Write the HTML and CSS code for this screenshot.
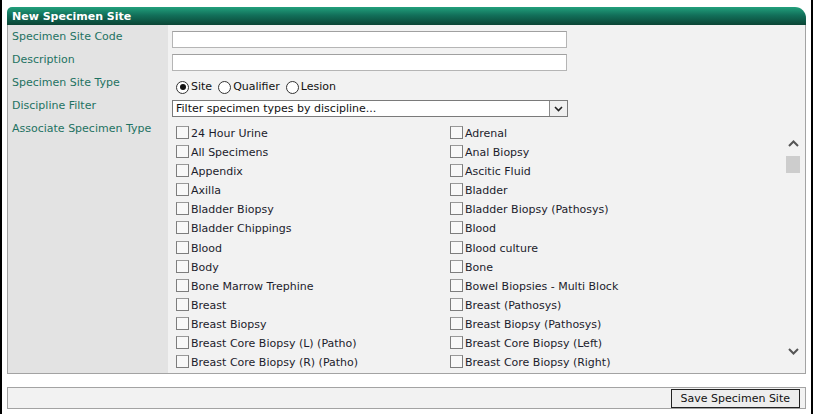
FILE: index.html
```html
<!DOCTYPE html>
<html>
<head>
<title>New Specimen Site</title>
<link rel="stylesheet" href="styles.css">
</head>
<body>
<div class="frame">

<div class="title">New Specimen Site</div>

<div class="form">
  <div class="label">Specimen Site Code</div>
  <div class="value"><input class="text" type="text"></div>

  <div class="label">Description</div>
  <div class="value"><input class="text" type="text"></div>

  <div class="label">Specimen Site Type</div>
  <div class="value radios">
    <span class="opt"><span class="radio on"></span>Site</span>
    <span class="opt"><span class="radio"></span>Qualifier</span>
    <span class="opt"><span class="radio"></span>Lesion</span>
  </div>

  <div class="label">Discipline Filter</div>
  <div class="value">
    <div class="select">
      <span class="select-text">Filter specimen types by discipline...</span>
      <span class="select-btn">
        <svg width="9" height="6" viewBox="0 0 9 6"><path d="M1 1 L4.5 4.5 L8 1" fill="none" stroke="#222" stroke-width="1.6"/></svg>
      </span>
    </div>
  </div>

  <div class="label">Associate Specimen Type</div>
  <div class="value list-cell">
    <div class="list">
      <div class="item"><span class="box"></span>24 Hour Urine</div>
      <div class="item"><span class="box"></span>Adrenal</div>
      <div class="item"><span class="box"></span>All Specimens</div>
      <div class="item"><span class="box"></span>Anal Biopsy</div>
      <div class="item"><span class="box"></span>Appendix</div>
      <div class="item"><span class="box"></span>Ascitic Fluid</div>
      <div class="item"><span class="box"></span>Axilla</div>
      <div class="item"><span class="box"></span>Bladder</div>
      <div class="item"><span class="box"></span>Bladder Biopsy</div>
      <div class="item"><span class="box"></span>Bladder Biopsy (Pathosys)</div>
      <div class="item"><span class="box"></span>Bladder Chippings</div>
      <div class="item"><span class="box"></span>Blood</div>
      <div class="item"><span class="box"></span>Blood</div>
      <div class="item"><span class="box"></span>Blood culture</div>
      <div class="item"><span class="box"></span>Body</div>
      <div class="item"><span class="box"></span>Bone</div>
      <div class="item"><span class="box"></span>Bone Marrow Trephine</div>
      <div class="item"><span class="box"></span>Bowel Biopsies - Multi Block</div>
      <div class="item"><span class="box"></span>Breast</div>
      <div class="item"><span class="box"></span>Breast (Pathosys)</div>
      <div class="item"><span class="box"></span>Breast Biopsy</div>
      <div class="item"><span class="box"></span>Breast Biopsy (Pathosys)</div>
      <div class="item"><span class="box"></span>Breast Core Biopsy (L) (Patho)</div>
      <div class="item"><span class="box"></span>Breast Core Biopsy (Left)</div>
      <div class="item"><span class="box"></span>Breast Core Biopsy (R) (Patho)</div>
      <div class="item"><span class="box"></span>Breast Core Biopsy (Right)</div>
    </div>
    <div class="scrollbar">
      <div class="arrow">
        <svg width="11" height="7" viewBox="0 0 11 7"><path d="M1 6 L5.5 1.5 L10 6" fill="none" stroke="#555" stroke-width="2"/></svg>
      </div>
      <div class="thumb"></div>
      <div class="track"></div>
      <div class="arrow">
        <svg width="11" height="7" viewBox="0 0 11 7"><path d="M1 1 L5.5 5.5 L10 1" fill="none" stroke="#555" stroke-width="2"/></svg>
      </div>
    </div>
  </div>
</div>

<div class="footer">
  <button class="save" type="button">Save Specimen Site</button>
</div>

</div>
</body>
</html>
```

FILE: styles.css
```css
/* New Specimen Site form */

body
{ margin: 0;
background-color: white;
font-family: "DejaVu Sans", Verdana, sans-serif;
font-size: 11px;
}

div.frame
{ height: 412px;
border-left: 2px solid #000;
border-right: 2px solid #000;
border-bottom: 2px solid #000;
padding: 7px 5px 0 5px;
}

div.title
{ height: 18px;
line-height: 19px;
padding-left: 5px;
color: white;
font-weight: bold;
background: linear-gradient(#22a07c, #12705a 45%, #0b4535);
border-radius: 5px 11px 0 0;
}

div.form
{ display: grid;
grid-template-columns: 160px 1fr;
grid-template-rows: 23px 23px 23px 23px 1fr;
height: 348px;
border: 1px solid #a3a3a3;
border-top: none;
background-color: #f2f2f2;
}

div.label
{ background-color: #e3e3e3;
color: #1e7262;
padding: 5px 4px 0 4px;
line-height: 14px;
}

div.value
{ padding: 6px 0 0 4px;
}

input.text
{ display: block;
box-sizing: border-box;
width: 395px;
height: 17px;
margin: 0;
border: 1px solid #b5b5b5;
border-top-color: #a0a0a0;
background: white;
}

div.radios
{ display: flex;
align-items: center;
gap: 6px;
padding: 9px 0 0 8px;
color: #111;
line-height: 14px;
}

span.opt
{ display: flex;
align-items: center;
gap: 2px;
}

span.radio
{ box-sizing: border-box;
width: 13px;
height: 13px;
border: 1px solid #333;
border-radius: 50%;
background: white;
position: relative;
}

span.radio.on::after
{ content: "";
position: absolute;
left: 2.5px;
top: 2.5px;
width: 6px;
height: 6px;
border-radius: 50%;
background: #111;
}

div.select
{ box-sizing: border-box;
display: flex;
align-items: center;
width: 396px;
height: 17px;
border: 1px solid #7a7a7a;
background: white;
}

span.select-text
{ flex: 1;
padding-left: 3px;
color: #111;
line-height: 15px;
}

span.select-btn
{ box-sizing: border-box;
display: flex;
align-items: center;
justify-content: center;
width: 18px;
height: 15px;
border-left: 1px solid #8a8a8a;
background: #f0f0f0;
}

div.list-cell
{ display: flex;
padding: 8px 4px 0 8px;
overflow: hidden;
}

div.list
{ flex: 1;
display: grid;
grid-template-columns: 274px 1fr;
grid-auto-rows: 19.1px;
align-content: start;
}

div.item
{ display: flex;
align-items: flex-start;
gap: 2px;
line-height: 18px;
color: #1c1c2c;
white-space: nowrap;
}

span.box
{ box-sizing: border-box;
flex: none;
width: 13px;
height: 13px;
margin-top: 1px;
border: 1px solid #7d7d7d;
border-top-color: #999;
background: #f8f8f8;
}

div.scrollbar
{ display: flex;
flex-direction: column;
align-items: center;
width: 16px;
padding-top: 10px;
padding-bottom: 14px;
}

div.arrow
{ height: 16px;
display: flex;
align-items: center;
justify-content: center;
}

div.thumb
{ width: 14px;
height: 17px;
margin-top: 5px;
background: #cdcdcd;
}

div.track
{ flex: 1;
}

div.footer
{ display: flex;
justify-content: flex-end;
margin-top: 13px;
height: 19px;
padding: 1px 5px 0 0;
border: 1px solid #a3a3a3;
background-color: #f2f2f2;
}

button.save
{ height: 19px;
padding: 0 9px;
margin: 0;
font-family: "DejaVu Sans", Verdana, sans-serif;
font-size: 11px;
color: #111;
border: 1px solid #222;
background: #ededed;
}
```
